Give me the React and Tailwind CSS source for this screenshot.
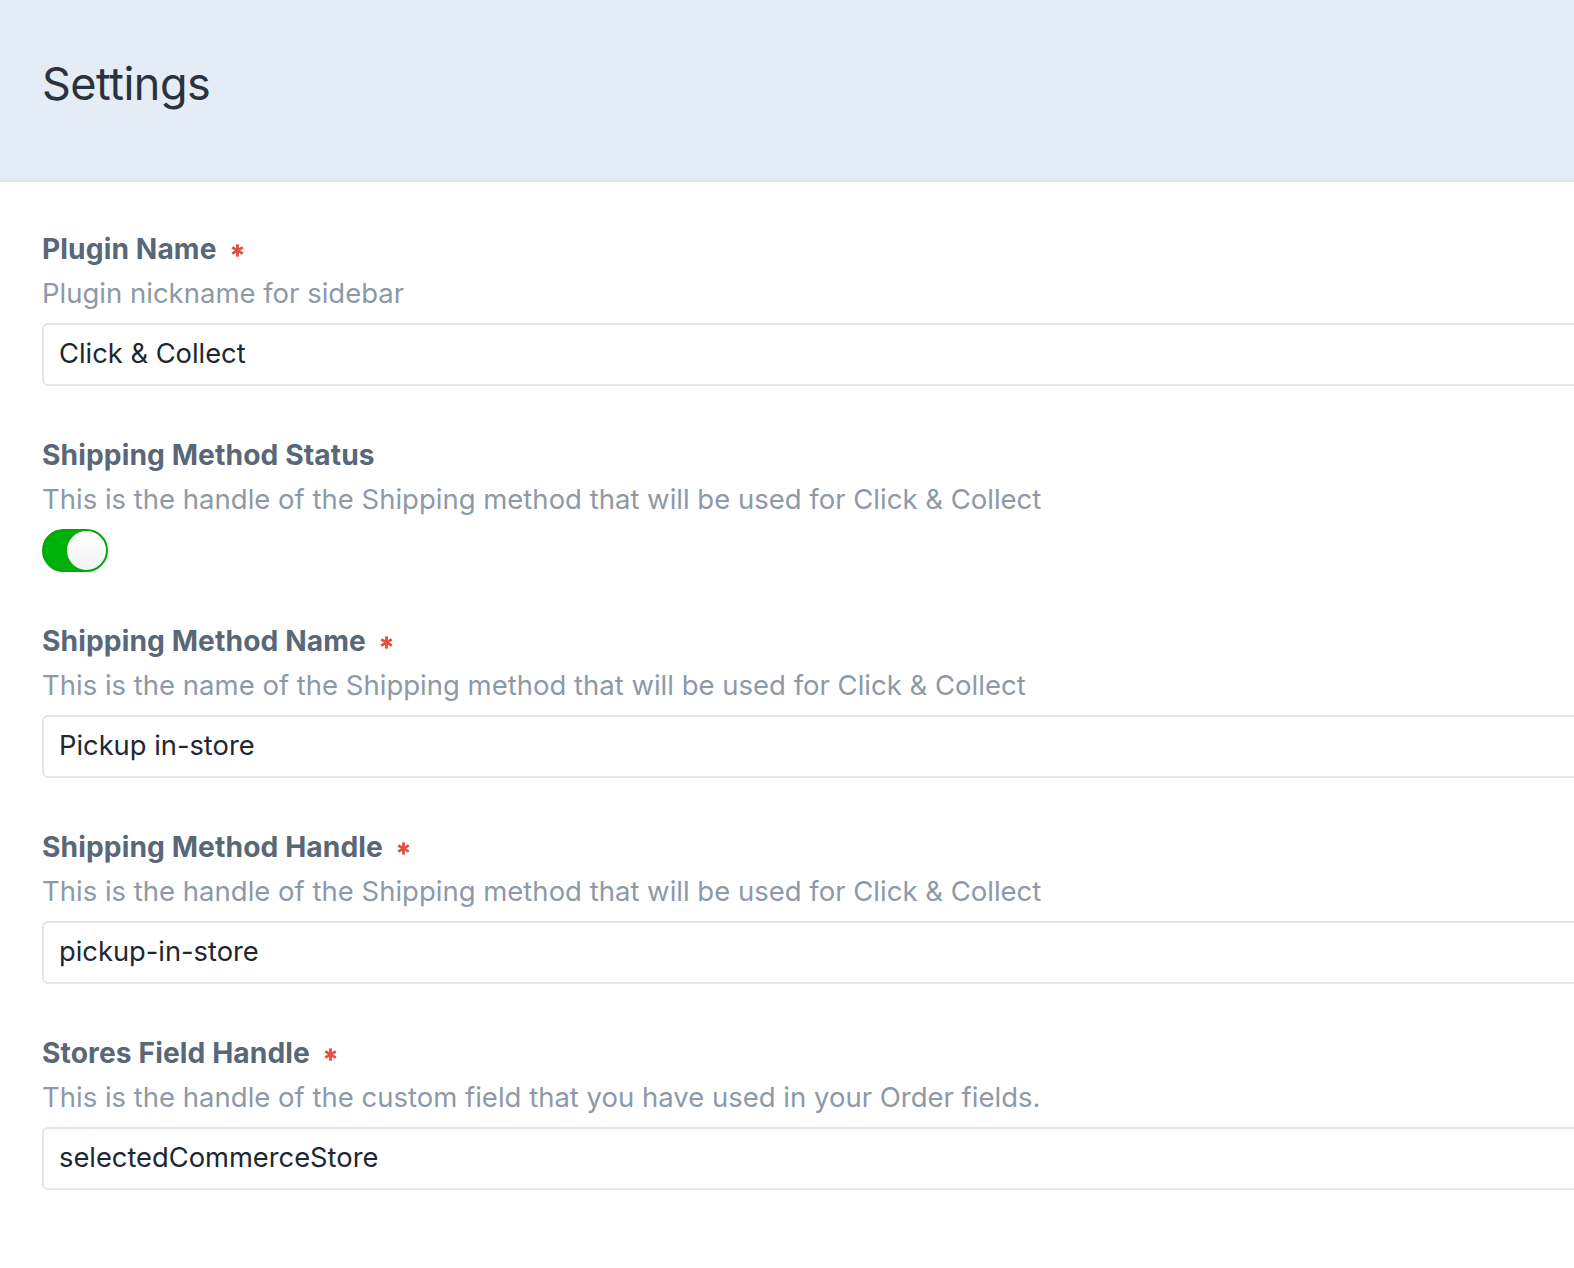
import React from 'react';

const fields = [
  { label: 'Plugin Name', hint: 'Plugin nickname for sidebar', value: 'Click & Collect', required: true },
  { label: 'Shipping Method Status', hint: 'This is the handle of the Shipping method that will be used for Click & Collect', toggle: true },
  { label: 'Shipping Method Name', hint: 'This is the name of the Shipping method that will be used for Click & Collect', value: 'Pickup in-store', required: true },
  { label: 'Shipping Method Handle', hint: 'This is the handle of the Shipping method that will be used for Click & Collect', value: 'pickup-in-store', required: true },
  { label: 'Stores Field Handle', hint: 'This is the handle of the custom field that you have used in your Order fields.', value: 'selectedCommerceStore', required: true },
];

// little red asterisk next to required labels
const Required = () => (
  <svg width="13" height="13" viewBox="0 0 12 12" className="ml-[14px] mt-[2px]">
    <g stroke="#e5503d" strokeWidth="2.6" strokeLinecap="butt">
      <line x1="6" y1="0.3" x2="6" y2="11.7" />
      <line x1="1.1" y1="3.1" x2="10.9" y2="8.9" />
      <line x1="1.1" y1="8.9" x2="10.9" y2="3.1" />
    </g>
  </svg>
);

const Toggle = () => (
  <div className="mt-[10px] flex h-[43px] w-[66px] items-center justify-end rounded-full border-2 border-[#00a80a] bg-[#00b00b]">
    <div className="h-[39px] w-[39px] rounded-full bg-gradient-to-b from-white to-[#f3f3f3]" />
  </div>
);

function Field({ field }) {
  return (
    <div className="flex flex-col">
      <div className="flex h-[40px] items-center">
        <span className="text-[28.2px] font-bold leading-[40px] tracking-[0.1px] text-[#596778]">{field.label}</span>
        {field.required && <Required />}
      </div>
      <div className="mt-[4px] text-[27.5px] leading-[40px] text-[#8e99a7]">{field.hint}</div>
      {field.toggle ? (
        <Toggle />
      ) : (
        <div className="mt-[10px] -mr-[20px] flex h-[63px] items-center rounded-[6px] border-2 border-[#e3e5e8] bg-white px-[15px]">
          <span className="text-[27.3px] text-[#1c2733]">{field.value}</span>
        </div>
      )}
    </div>
  );
}

export default function App() {
  return (
    <div className="min-h-screen overflow-hidden bg-white" style={{ fontFamily: 'Inter, "Noto Sans", sans-serif' }}>
      <header className="flex h-[182px] items-start border-b-2 border-[#e0e4e9] bg-[#e4ecf5] px-[42px] pt-[55px]">
        <h1 className="text-[45px] font-normal leading-[58px] tracking-[-0.5px] text-[#29323d]">Settings</h1>
      </header>
      <main className="flex flex-col gap-[49px] pl-[42px] pt-[47px]">
        {fields.map((f) => (
          <Field key={f.label} field={f} />
        ))}
      </main>
    </div>
  );
}
